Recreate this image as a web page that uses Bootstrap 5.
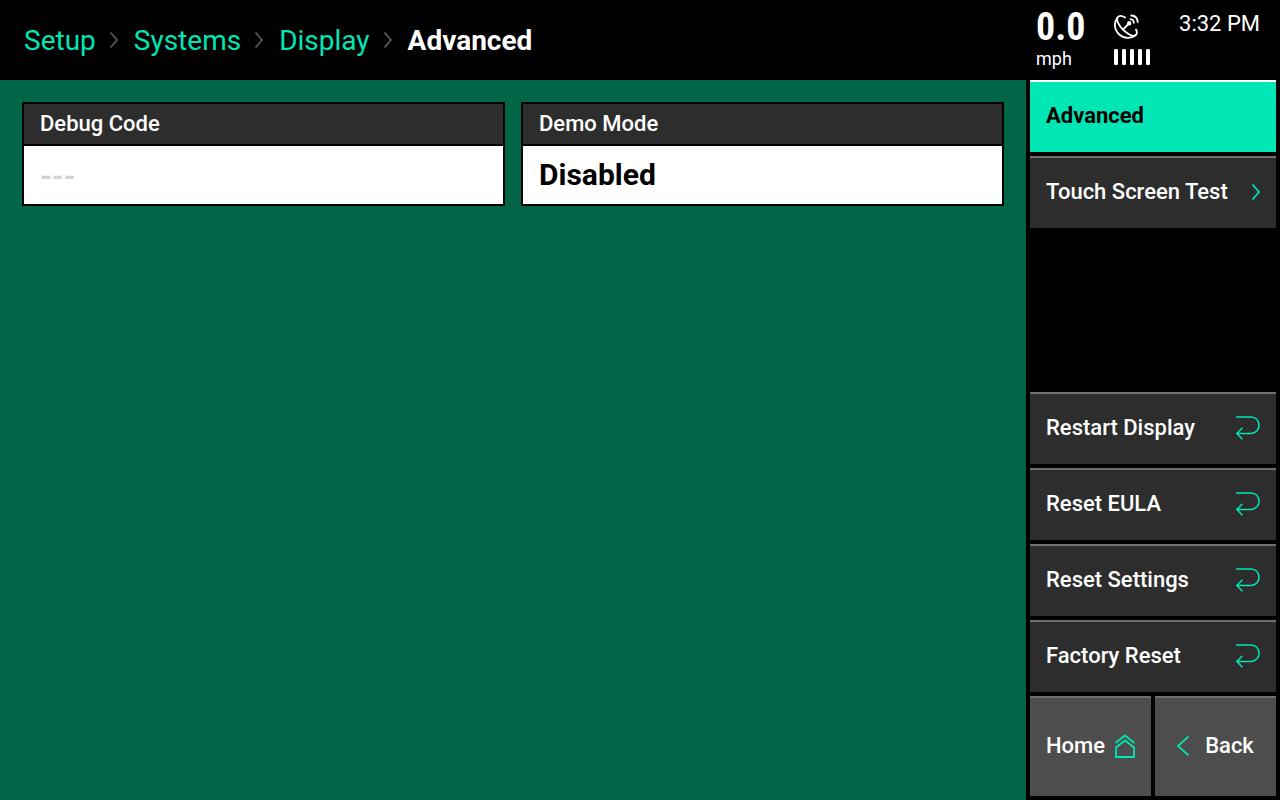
<!DOCTYPE html>
<html lang="en">
<head>
<meta charset="utf-8">
<meta name="viewport" content="width=device-width, initial-scale=1">
<title>Advanced display setup</title>
<link href="https://cdn.jsdelivr.net/npm/bootstrap@5.3.0/dist/css/bootstrap.min.css" rel="stylesheet">
<style>
  body { font-family: Roboto, "Liberation Sans", sans-serif; background: #000; color: #fff; }
  svg { fill: none; flex: none; }
  .topbar { height: 80px; }
  .crumbs { gap: 16px; font-size: 28px; line-height: 33px; padding-left: 24px; }
  .crumbs a { color: #00e6b4; text-decoration: none; }
  .crumbs li { gap: 14px; }
  .crumb-here { font-weight: 700; }
  .status { width: 250px; padding: 10px 20px 0 6px; }
  .speed { font-family: "Roboto Condensed", Roboto, sans-serif; font-weight: 700; font-size: 38px; line-height: 34px; width: 78px; }
  .unit { font-size: 18px; line-height: 30px; }
  .clock { font-size: 22px; line-height: 28px; }
  .workspace { background: #006647; padding: 22px; }
  .fields { --bs-gutter-x: 16px; --bs-gutter-y: 16px; }
  .field { border: 2px solid #000; background: #fff; }
  .field label { background: #2d2d2d; border-bottom: 2px solid #000; font-size: 22px; line-height: 26px; font-weight: 500; padding: 7px 16px; height: 42px; }
  .field-value { appearance: none; border: 0; background: #fff; color: #000; font-size: 30px; line-height: 36px; font-weight: 700; height: 58px; padding: 0 16px; }
  .field-value::placeholder { color: #d2d2d2; opacity: 1; }
  .side { width: 254px; padding: 0 4px 4px; gap: 4px; }
  .side .btn { --bs-btn-color: #fff; --bs-btn-bg: #2d2d2d; --bs-btn-hover-color: #fff; --bs-btn-hover-bg: #3a3a3a; border: 0; border-top: 2px solid #707070; border-radius: 0; font-size: 22px; line-height: 26px; font-weight: 500; height: 72px; padding: 0 16px 2px; color: #fff; text-align: left; }
  .side .btn-here { background: #00e6b4; border-top-color: #fff; color: #000; font-weight: 700; }
  .side .btn-foot { background: #4d4d4d; height: 100px; }
  .accent { stroke: #00e6b4; }
</style>
</head>
<body>
<svg class="d-none" aria-hidden="true">
  <symbol id="return" viewBox="1 0 24 26"><path d="M1 2h15c4.500 0 8 3.500 8 8.200s-3.500 8.200-8 8.200H2M7.500 12.800L1.700 18.500l5.800 5.700" fill="none" stroke-width="1.500"/></symbol>
  <symbol id="chevron" viewBox="0 0 8 16"><path d="M0.500 0.500L7 8l-6.500 7.500" fill="none"/></symbol>
</svg>
<div class="d-flex flex-column min-vh-100">
  <header class="topbar d-flex justify-content-between">
    <nav class="d-flex align-items-center" aria-label="Breadcrumb">
      <ol class="crumbs list-unstyled d-flex m-0">
        <li class="d-flex align-items-center"><a href="#">Setup</a><svg width="8" height="16" stroke="#5a5a5a" stroke-width="1.700"><use href="#chevron"/></svg></li>
        <li class="d-flex align-items-center"><a href="#">Systems</a><svg width="8" height="16" stroke="#5a5a5a" stroke-width="1.700"><use href="#chevron"/></svg></li>
        <li class="d-flex align-items-center"><a href="#">Display</a><svg width="8" height="16" stroke="#5a5a5a" stroke-width="1.700"><use href="#chevron"/></svg></li>
        <li class="crumb-here" aria-current="page">Advanced</li>
      </ol>
    </nav>
    <div class="status d-flex">
      <div>
        <div class="speed">0.0</div>
        <div class="unit">mph</div>
      </div>
      <div class="d-flex flex-column gap-2 pt-1">
        <svg width="26" height="26" viewBox="0 0 26 26" stroke="#fff" stroke-width="1.800" stroke-linecap="round" role="img" aria-label="GPS">
          <path d="M3.500 3.500C-.5 8.500 .2 16 5.200 20.500C10 24.800 17 25 21.500 21.300"/>
          <path d="M11 3.500C8 1.500 5 1.500 3.500 3.500C2.200 6 4.500 11.500 9 15.700C13.500 20 19 23 21.500 21.300C23.200 20 23.300 18 22 15.500"/>
          <path d="M9 15.700L15 9.500"/>
          <circle cx="15.200" cy="9.300" r="1.300" fill="#fff"/>
          <path d="M16.500 5.200c2 .2 3.200 1.500 3.400 3.600M17.200 1.500c4 .2 6.300 2.800 6.500 6.500"/>
        </svg>
        <svg width="36" height="17" viewBox="0 0 36 17" fill="#fff" role="img" aria-label="Signal strength 5 of 5">
          <g fill="#fff"><rect y="1" width="4" height="16" rx="1.200"/><rect x="8" y="1" width="4" height="16" rx="1.200"/><rect x="16" y="1" width="4" height="16" rx="1.200"/><rect x="24" y="1" width="4" height="16" rx="1.200"/><rect x="32" y="1" width="4" height="16" rx="1.200"/></g>
        </svg>
      </div>
      <time class="clock ms-auto">3:32 PM</time>
    </div>
  </header>
  <div class="d-flex flex-grow-1">
    <main class="workspace flex-grow-1">
      <div class="row fields">
        <div class="col-6">
          <div class="field">
            <label class="d-block" for="debug-code">Debug Code</label>
            <input class="field-value d-block w-100" id="debug-code" type="text" placeholder="---">
          </div>
        </div>
        <div class="col-6">
          <div class="field">
            <label class="d-block" for="demo-mode">Demo Mode</label>
            <select class="field-value d-block w-100" id="demo-mode"><option>Disabled</option><option>Enabled</option></select>
          </div>
        </div>
      </div>
    </main>
    <aside class="side d-flex flex-column flex-shrink-0">
      <button type="button" class="btn btn-here">Advanced</button>
      <button type="button" class="btn d-flex align-items-center justify-content-between">Touch Screen Test<svg class="accent" width="8" height="16" stroke-width="1.700"><use href="#chevron"/></svg></button>
      <button type="button" class="btn mt-auto d-flex align-items-center justify-content-between">Restart Display<svg class="accent" width="24" height="26"><use href="#return"/></svg></button>
      <button type="button" class="btn d-flex align-items-center justify-content-between">Reset EULA<svg class="accent" width="24" height="26"><use href="#return"/></svg></button>
      <button type="button" class="btn d-flex align-items-center justify-content-between">Reset Settings<svg class="accent" width="24" height="26"><use href="#return"/></svg></button>
      <button type="button" class="btn d-flex align-items-center justify-content-between">Factory Reset<svg class="accent" width="24" height="26"><use href="#return"/></svg></button>
      <div class="d-flex gap-1">
        <button type="button" class="btn btn-foot w-50 d-flex align-items-center justify-content-between">Home<svg class="accent" width="20" height="24" viewBox="0 0 20 24" stroke-width="1.800"><path d="M0.500 9L10 1.500l9.500 7.500M1 23V13.500L10 6.500l9 7V23z"/></svg></button>
        <button type="button" class="btn btn-foot w-50 d-flex align-items-center justify-content-center gap-3"><svg class="accent" width="12" height="20" viewBox="0 0 12 20" stroke-width="1.700"><path d="M11.500 0.500L1 10l10.500 9.500"/></svg>Back</button>
      </div>
    </aside>
  </div>
</div>
<script src="https://cdn.jsdelivr.net/npm/bootstrap@5.3.0/dist/js/bootstrap.bundle.min.js"></script>
</body>
</html>
